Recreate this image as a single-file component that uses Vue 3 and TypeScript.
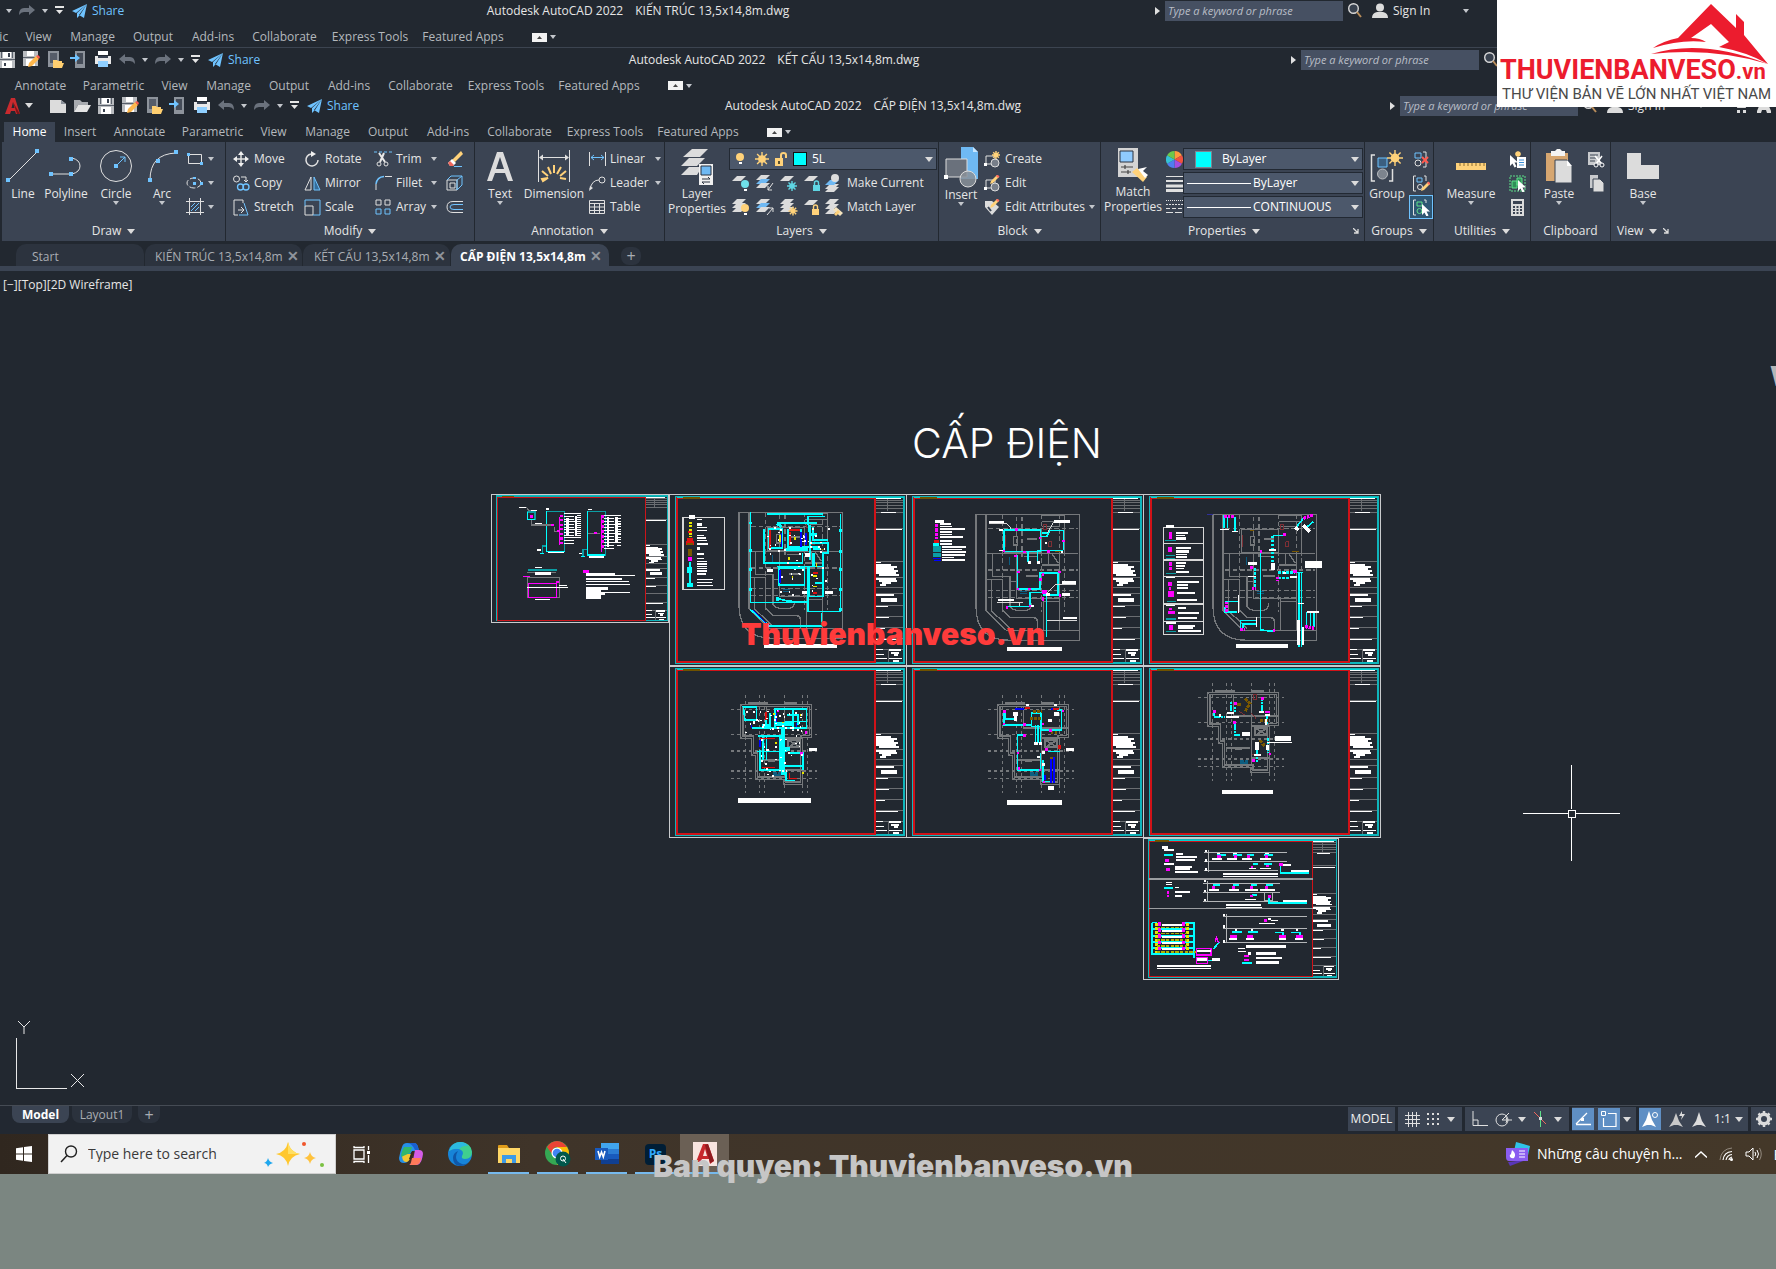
<script setup lang="ts">
import { h } from 'vue'

type IconDef = [number, number, string]

const L = 'fill="none" stroke="#e0e0e0"'
const B = 'fill="none" stroke="#6fc3ff"'
const lay = (y: number, c = '#dcdcdc') => `<path d="M5 ${y}h9l-5 5h-9z" fill="${c}"/>`
const bulb = (x: number, y: number, c: string) =>
  `<circle cx="${x}" cy="${y}" r="4" fill="${c}"/><path d="M${x - 1} ${y + 5}h3v2h-3z" fill="#fff"/>`
const ray = (x: number, y: number, r: number, c = '#ffd27a') =>
  `<circle cx="${x}" cy="${y}" r="${r * 0.55}" fill="${c}"/><g stroke="${c}" stroke-width="1.4"><path d="M${x} ${y - r}V${y + r}M${x - r} ${y}H${x + r}M${x - r * 0.7} ${y - r * 0.7}L${x + r * 0.7} ${y + r * 0.7}M${x - r * 0.7} ${y + r * 0.7}L${x + r * 0.7} ${y - r * 0.7}"/></g>`
const padlock = (x: number, y: number, c: string) =>
  `<path d="M${x} ${y}h7v6h-7z" fill="${c}"/><path d="M${x + 1.5} ${y}v-2a2 2 0 0 1 4 0v2" fill="none" stroke="${c}" stroke-width="1.4"/>`
const pencil = (x: number, y: number) =>
  `<path d="M${x} ${y + 9}l1-3 6-6 2 2-6 6z" fill="#ffd27a"/><path d="M${x + 6} ${y + 1}l1.500-1.500 2 2-1.500 1.500z" fill="#ff6b5e"/>`
const cursor = (x: number, y: number) =>
  `<path d="M${x} ${y}v11l2.500-2.500 2 4 2-1-2-4h3.500z" fill="#fff"/>`

const icons: Record<string, IconDef> = {
  acad: [18, 18, '<path d="M7 1h4l5 16h-4l-1-3H7l-1 3H1zM9 5l-1.500 6h3z" fill="#c92a2e" fill-rule="evenodd"/><path d="M9 5l7 12h-3z" fill="#7d1317"/>'],
  doc: [18, 14, '<path d="M1 1h11l5 4v9H1z" fill="#dcdcdc"/><path d="M12 1v4h5" fill="#8a9099"/>'],
  open: [18, 14, '<path d="M1 13V1h6l2 2h6v3H5z" fill="#a8abb0"/><path d="M5 6h13l-4 7H1z" fill="#e4e4e4"/>'],
  save: [16, 16, '<path d="M0 0h16v16H0z" fill="#b9bcc0"/><path d="M4 0h8v6H4zM3 9h10v7H3z" fill="#fff"/><path d="M0 7h16v1H0zM2 0h1v6H2zM13 0h1v6h-1z" fill="#59606b"/><path d="M9 1h2v4H9zM5 11h2v3H5z" fill="#39414e"/>'],
  saveas: [18, 17, '<path d="M1 0h15v15H1z" fill="#b9bcc0"/><path d="M5 0h7v5H5zM4 8h9v7H4z" fill="#fff"/><path d="M1 6h15v1H1z" fill="#59606b"/><path d="M6 16l1-4 7-7 3 3-7 7z" fill="#ffb84d"/><path d="M14 5l2-1 2 2-1 2z" fill="#ff5a4f"/>'],
  mopen: [18, 18, '<path d="M2 0h11v16H2z" fill="#8d939b"/><path d="M4 2h7v10H4z" fill="#565d69"/><path d="M7 17V9h4l1 1h4v2h2l-2 5z" fill="#ffcf70"/>'],
  mobile: [18, 18, '<path d="M5 0h10v17H5z" fill="#8d939b"/><path d="M7 2h6v11H7z" fill="#454c58"/><path d="M0 6h5V3l5 4-5 4V8H0z" fill="#6fc3ff"/>'],
  print: [18, 17, '<path d="M4 0h10v4H4z" fill="#fff"/><path d="M1 5h16v8H1z" fill="#e8e8e8"/><path d="M4 5h10v2H4z" fill="#3b4453"/><path d="M4 10h10v6H4z" fill="#8fcfff"/>'],
  undo: [16, 12, '<path d="M0 5l6-5v3h5q5 0 5 7-2-3-5-3H6v3z" fill="#6b727d"/>'],
  redo: [16, 12, '<path d="M16 5l-6-5v3H5q-5 0-5 7 2-3 5-3h5v3z" fill="#6b727d"/>'],
  dd: [9, 9, '<path d="M0 0h9v2H0zM1 4h7L4.500 8z" fill="#e6e6e6"/>'],
  tri: [6, 4, '<path d="M0 0h6L3 4z" fill="#c4c7cc"/>'],
  bigtri: [8, 5, '<path d="M0 0h8L4 5z" fill="#dcdcdc"/>'],
  rtri: [5, 8, '<path d="M0 0l5 4-5 4z" fill="#e0e0e0"/>'],
  plane: [15, 14, '<path d="M15 0L0 7l4 2zM15 0L5 9v5l3-3zM15 0l-3 14-5-3z" fill="#6fc3ff"/>'],
  mag: [14, 15, '<circle cx="5.500" cy="5.500" r="4.800" fill="#39424f" stroke="#d8d8d8" stroke-width="1.400"/><path d="M9 9l4 5" stroke="#b98d5a" stroke-width="2"/>'],
  person: [16, 15, '<circle cx="8" cy="4.500" r="4" fill="#dcdcdc"/><path d="M0 15q0-5 5-6h6q5 1 5 6z" fill="#dcdcdc"/>'],
  cart: [14, 14, '<path d="M0 1h3l2 7h7l2-5H4" fill="none" stroke="#dcdcdc" stroke-width="2"/><path d="M4 11h3v3H4zM10 11h3v3h-3z" fill="#dcdcdc"/>'],
  appA: [14, 14, '<path d="M5 0h4l5 12v2h-4l-1-3H5l-1 3H0v-2z" fill="#dcdcdc"/>'],
  mini: [15, 9, '<path d="M0 0h15v9H0z" fill="#f2f2f2"/><path d="M5 6l2.500-3L10 6z" fill="#444"/>'],
  launch: [6, 6, '<path d="M0 0l5 5M5 1v4H1" fill="none" stroke="#dcdcdc" stroke-width="1.300"/>'],
  line: [34, 34, `<path d="M3 31L31 3" ${L}/><path d="M0 29h4v4H0zM29 0h4v4h-4z" fill="#6fc3ff"/>`],
  polyline: [34, 34, `<path d="M3 25h20q8-2 8-8t-8-8" ${L}/><path d="M0 23h4v4H0zM20 23h4v4h-4zM20 8h4v4h-4z" fill="#6fc3ff"/>`],
  circle: [34, 34, `<circle cx="17" cy="17" r="15.500" ${L}/><path d="M17 17l9-9M21 8h5v5" ${B}/><path d="M15 15h4v4h-4z" fill="#6fc3ff"/>`],
  arc: [34, 34, `<path d="M5 31Q5 5 31 4" ${L}/><path d="M3 29h4v4H3zM11 10h4v4h-4zM29 1h4v4h-4z" fill="#6fc3ff"/>`],
  rect: [18, 14, `<path d="M2.500 2.500h13v9h-13z" ${L}/><path d="M1 1h3v3H1zM14 10h3v3h-3z" fill="#6fc3ff"/>`],
  ellipse: [18, 14, `<ellipse cx="8" cy="7" rx="7" ry="5" ${L} stroke-dasharray="6 2"/><path d="M7 6h3v3H7zM14 6h3v3h-3zM7 1h3v2H7z" fill="#6fc3ff"/>`],
  hatch: [18, 18, `<path d="M3.500 0v17M14.500 0v17M0 3.500h18M0 14.500h18" ${L}/><path d="M5 9l4-4M5 13l8-8M9 13l4-4" ${B}/>`],
  move: [16, 16, `<path d="M8 2v12M2 8h12" ${L} stroke-width="1.500"/><path d="M8 0l3 4H5zM8 16l3-4H5zM0 8l4-3v6zM16 8l-4-3v6z" fill="#f0f0f0"/>`],
  rotate: [16, 16, `<path d="M7 3a6 6 0 1 0 7 6" ${L} stroke-width="1.500"/><path d="M7 0l5 3-5 3z" fill="#f0f0f0"/>`],
  trim: [18, 16, `<path d="M0 1h18" ${B} stroke-dasharray="3 2"/><path d="M5 2l6 9M10 2L6 11" stroke="#e8e8e8" stroke-width="2"/><circle cx="5" cy="13" r="2" ${L}/><circle cx="12" cy="13" r="2" ${L}/>`],
  erase: [17, 16, '<path d="M6 9l9-9 2 3-8 8z" fill="#ffd27a"/><path d="M2 12l4-4 4 4-3 3H4z" fill="#fff"/><path d="M2 12l2-2 4 4-1 1H4z" fill="#f0675c"/><path d="M8 15.500h8" stroke="#6fc3ff"/>'],
  copy: [17, 16, `<circle cx="3.500" cy="4" r="3" ${L}/><path d="M8 2h5v5M11 5l2 2 2-2" ${L}/><circle cx="7.500" cy="12" r="3" ${B} stroke-width="1.300"/><circle cx="13" cy="12" r="3" ${B} stroke-width="1.300"/>`],
  mirror: [17, 15, `<path d="M7 1v13H1z" ${L}/><path d="M10 1v13h6z" fill="#356c99" stroke="#6fc3ff"/>`],
  fillet: [17, 16, `<path d="M1 15V9" ${L}/><path d="M1 9Q2 2 9 1.500" ${B} stroke-width="1.500"/><path d="M10 1.500h7" ${L}/>`],
  box3: [17, 16, `<path d="M1 5h10v10H1zM4 8h5v5H4z" ${L}/><path d="M1 5l4-4h11v9l-5 5V5l5-4M5 1" ${B}/>`],
  stretch: [16, 17, `<path d="M10 4V1H1v15h4M5 11h6M8 8l3 3-3 3" ${L}/><path d="M11 4l4 12H6" ${B}/>`],
  scale: [17, 17, `<path d="M1 7h8v9H1z" ${L}/><path d="M1 7V1h15v15H9" ${B}/>`],
  array: [16, 16, `<path d="M1 1h5v5H1zM10 1h5v5h-5z" ${L}/><path d="M1 10h5v5H1zM10 10h5v5h-5z" ${B}/>`],
  offset: [17, 14, `<path d="M17 1.500H7q-6 0-6 5.500t6 5.500h10" ${L}/><path d="M17 4.500H8q-4 0-4 2.500t4 2.500h9" ${B}/>`],
  text: [28, 34, '<path d="M11 3h6l10 29h-5l-3-8H9l-3 8H1zM14 8l-4 12h8z" fill="#dcdcdc" fill-rule="evenodd"/>'],
  dim: [34, 34, `<path d="M1.500 1v32M32.500 1v32M3 8.500h28" ${L}/><path d="M2 8.500l4-3v6zM32 8.500l-4-3v6z" fill="#e0e0e0"/><path d="M5 30l6-1-5 3zM5 22l6 5M11 18l3 7M17 16v8M24 18l-4 7M29 22l-6 5M29 30l-6-1" stroke="#ffd27a" stroke-width="2"/>`],
  linear: [17, 15, `<path d="M.5 0v14M16.500 0v14" ${L}/><path d="M2 5.500h13M5 3L2 5.500 5 8M12 3l3 2.500L12 8" ${B}/>`],
  leader: [17, 15, `<path d="M1 13q2-9 9-9" ${L}/><circle cx="13" cy="4" r="3" ${L}/><path d="M0 15l1-5 3 2z" fill="#e0e0e0"/>`],
  table: [16, 14, `<path d="M.5.500h15v13H.500zM.500 3.500h15M.500 7h15M.500 10.500h15M5.500 3v11M10.500 3v11" ${L}/>`],
  layprop: [34, 38, '<path d="M12 2h16l-8 8H3zM9 11h16l-8 8H1zM9 20h13l-5 8H1z" fill="#dcdcdc"/><path d="M19 17h14v21H19z" fill="#f0f0f0"/><path d="M21 19h10v9H21z" fill="#6fb9f3" stroke="#2b3340"/><path d="M22 32h8M28 30l2 2M22 35h8M22 35l2 2" stroke="#2b3340" fill="none"/>'],
  bulbI: [10, 15, bulb(5, 5, '#ffd27a')],
  sun: [14, 14, ray(7, 7, 7)],
  unlock: [14, 14, '<path d="M1 6h8v8H1z" fill="#ffd27a"/><path d="M7 6V3q0-2 2.500-2T12 3v3" fill="none" stroke="#ffd27a" stroke-width="2"/><path d="M4 9h2v3H4z" fill="#5a5030"/>'],
  l1: [18, 17, lay(1) + bulb(13, 9, '#6fe0ea')],
  l2: [18, 17, lay(0) + lay(4, '#6fb9f3') + lay(8) + `<path d="M17 8l-5 7M12 11v4h4" ${L}/>`],
  l3: [18, 17, lay(1) + ray(12, 11, 5, '#5fd5e3')],
  l4: [18, 17, lay(1) + padlock(9, 10, '#5fd5e3')],
  l5: [18, 18, lay(13) + lay(10) + lay(6, '#6fb9f3') + '<circle cx="10" cy="4" r="4" fill="#dcdcdc"/>'],
  l6: [18, 17, lay(0) + lay(4) + lay(8) + bulb(13, 9, '#ffd27a')],
  l7: [18, 17, lay(0) + lay(4, '#6fb9f3') + lay(8) + `<path d="M11 16l6-7M13 9h4v4" ${L}/>`],
  l8: [18, 17, lay(0) + lay(4) + lay(8) + ray(13, 12, 4.5)],
  l9: [18, 17, lay(1) + padlock(8, 10, '#ffd27a')],
  l10: [18, 17, lay(0) + lay(5) + lay(10) + '<path d="M8 11l3-3 7 6-3 3z" fill="#f4e3bd"/><path d="M9 15l4-4 2 2-4 4z" fill="#ffd27a"/>'],
  insert: [34, 42, '<path d="M17 0h12l5 5v27H17z" fill="#6fb9f3"/><path d="M29 0v5h5z" fill="#c7e6ff"/><path d="M2 12h21v18H2z" fill="#6a717c" stroke="#dcdcdc"/><circle cx="24" cy="32" r="8" fill="#8a9099" fill-opacity=".85" stroke="#dcdcdc"/><path d="M0 28h4v4H0z" fill="#fff"/>'],
  create: [17, 17, `<path d="M2 5h9v8H2z" ${L}/><circle cx="11" cy="12" r="4" fill="#777e89" stroke="#dcdcdc"/>` + ray(12, 4, 4) + '<path d="M0 12h3v3H0z" fill="#fff"/>'],
  edit: [17, 17, `<path d="M2 5h9v8H2z" ${L}/><circle cx="11" cy="12" r="4" fill="#777e89" stroke="#dcdcdc"/>` + pencil(6, 0) + '<path d="M0 12h3v3H0z" fill="#fff"/>'],
  attr: [17, 17, '<path d="M1 2h7l7 6-7 8-7-8z" fill="#dcdcdc"/><path d="M4 8l3 4" stroke="#3b4453" stroke-width="2"/>' + pencil(6, 0)],
  match: [34, 36, '<path d="M2 1h20v29H2z" fill="#d4d4d4"/><path d="M4 4h13v11H4z" fill="#8fcbff" stroke="#2b3340"/><path d="M5 20h12M9 18v4M5 25h10M12 23v4" stroke="#444" stroke-width="1.200"/><path d="M16 25l5-4 10 9-4 5z" fill="#ffd27a"/><path d="M22 22l9-2-4 4 5 4-3 3z" fill="#fff"/>'],
  wheel: [17, 17, '<g transform="translate(8.500 8.500)"><path d="M0 0V-8.500A8.500 8.500 0 0 1 7.400-4.200z" fill="#ff9a3c"/><path d="M0 0L7.400-4.200A8.500 8.500 0 0 1 7.400 4.200z" fill="#f0523f"/><path d="M0 0L7.400 4.200A8.500 8.500 0 0 1 0 8.500z" fill="#a44de0"/><path d="M0 0V8.500A8.500 8.500 0 0 1-7.400 4.200z" fill="#4f7df0"/><path d="M0 0L-7.400 4.200A8.500 8.500 0 0 1-7.400-4.200z" fill="#35c2d5"/><path d="M0 0L-7.400-4.200A8.500 8.500 0 0 1 0-8.500z" fill="#6cc94a"/></g>'],
  weights: [17, 17, '<path d="M0 1h17v1H0zM0 5h17v2H0zM0 9.500h17v3H0zM0 14h17v3H0z" fill="#e0e0e0"/>'],
  dashes: [17, 16, `<path d="M0 1.500h17" ${L} stroke-dasharray="1 1"/><path d="M0 5.500h17" ${L} stroke-dasharray="2 1"/><path d="M0 9.500h17" ${L} stroke-dasharray="4 2"/><path d="M0 13.500h17" ${L} stroke-dasharray="7 2"/>`],
  group: [34, 34, `<path d="M5 6H1.500v26H5M19 32h3.500V20" ${L} stroke-width="1.500"/><path d="M8 9h9v9H8z" fill="#3b5f80" stroke="#6fc3ff"/><circle cx="12.500" cy="25" r="5" fill="#7d848e" stroke="#b9bcc0"/>` + ray(25, 9, 8)],
  g1: [17, 17, `<path d="M2 2h6v5H2z" ${B}/><circle cx="5" cy="12" r="3" ${L}/><path d="M10 1h3v15h-3" ${L}/><path d="M9 6l6 6M15 6l-6 6" stroke="#ff5a4f" stroke-width="2"/>`],
  g2: [17, 17, `<path d="M3 1H.500v15H3M11 1h2v5" ${L}/><path d="M4 3h5v4H4z" ${B}/><circle cx="7" cy="12" r="2.500" ${L}/>` + pencil(8, 7)],
  g3: [17, 17, `<path d="M3 1H.500v15H3M11 1h2v3" ${L}/><path d="M4 3h5v4H4z" fill="none" stroke="#5fe08a"/><circle cx="6.500" cy="12" r="2.500" fill="none" stroke="#5fe08a"/>` + cursor(9, 5)],
  ruler: [30, 9, '<path d="M0 1h30v7H0z" fill="#ffd27a"/><path d="M4 1v3M8 1v3M12 1v3M16 1v3M20 1v3M24 1v3M28 1v3" stroke="#8a6d33"/>'],
  u1: [17, 17, cursor(1, 4) + '<path d="M8 6h9v11H8z" fill="#fff"/><path d="M10 9h5M10 11.500h5M10 14h5" stroke="#3a8fd8"/>' + ray(9, 3, 3)],
  u2: [17, 17, '<path d="M1 1h15v15H1z" fill="none" stroke="#5fe08a" stroke-dasharray="2 1"/><path d="M3 6h5v7H3zM8 3h5v7H8z" fill="#2f8f58" stroke="#5fe08a"/>' + cursor(9, 5)],
  calc: [13, 17, '<path d="M0 0h13v17H0z" fill="#dcdcdc"/><path d="M2 2h9v3H2zM2 7h2v2H2zM5.500 7h2v2h-2zM9 7h2v2H9zM2 10h2v2H2zM5.500 10h2v2h-2zM9 10h2v2H9zM2 13h2v2H2zM5.500 13h2v2h-2zM9 13h2v2H9z" fill="#3b4453"/>'],
  paste: [28, 34, '<path d="M1 4h22v28H1z" fill="#d6a670"/><path d="M6 2h4l2-2h3l2 2h3v5H6z" fill="#f4f4f4"/><path d="M10 11h12l5 6v17H10z" fill="#dcdcdc" stroke="#3b4453"/><path d="M22 11v6h5z" fill="#fff"/>'],
  cut: [17, 17, '<path d="M0 1h12v13H0z" fill="#c8cacd"/><path d="M2 4h8M2 7h6M2 10h5" stroke="#3b4453"/><path d="M7 5l7 8M14 5l-6 8" stroke="#fff" stroke-width="1.500"/><circle cx="8" cy="14" r="2" fill="#3b4453" stroke="#fff"/><circle cx="14" cy="14" r="2" fill="#3b4453" stroke="#fff"/>'],
  copy2: [15, 17, '<path d="M1 0h8v13H1z" fill="#c8cacd"/><path d="M4 4h7l4 4v9H4z" fill="#dcdcdc" stroke="#3b4453"/>'],
  base: [34, 26, '<path d="M1 0h14v12h18v14H1z" fill="#dcdcdc"/>'],
  grid: [15, 15, `<path d="M0 3.500h15M0 7.500h15M0 11.500h15M3.500 0v15M7.500 0v15M11.500 0v15" ${L}/>`],
  dots: [13, 13, '<path d="M0 0h2v2H0zM5 0h2v2H5zM10 0h2v2h-2zM0 5h2v2H0zM5 5h2v2H5zM10 5h2v2h-2zM0 10h2v2H0zM5 10h2v2H5zM10 10h2v2h-2z" fill="#dcdcdc"/>'],
  ortho: [16, 16, `<path d="M1 0v14.500h15M1 9h5v5" ${L}/>`],
  polar: [17, 15, `<circle cx="7" cy="8" r="6" ${L}/><path d="M7 8h10M7 8l7-7M11 5q2 3 0 6" ${L}/>`],
  iso: [14, 16, '<path d="M1 1l12 12" stroke="#f0675c"/><path d="M7.500 0v16" stroke="#5fe08a"/><path d="M6 6h3v3H6z" fill="#dcdcdc"/>'],
  otrack: [17, 14, '<path d="M1 12.500h15M1 12L12 1" fill="none" stroke="#fff" stroke-width="1.300"/><path d="M6 6h3v3H6z" fill="#fff"/>'],
  osnap: [16, 16, '<path d="M7 2.500h8v13H2.500V7" fill="none" stroke="#fff" stroke-width="1.200"/><path d="M.500.500h4v4h-4z" fill="none" stroke="#fff"/>'],
  ann1: [16, 16, '<path d="M7 0l3 9 4 7-5-2H5l-5 2 4-7z" fill="#fff"/><circle cx="13" cy="4" r="2.500" fill="none" stroke="#fff"/>'],
  ann2: [16, 16, '<path d="M7 2l3 8 4 6-5-2H5l-5 2 4-6z" fill="#c8c8c8"/><path d="M13 0l-3 5h3l-1 4 4-6h-3z" fill="#dcdcdc"/>'],
  ann3: [14, 15, '<path d="M7 0l3 9 4 6-5-2H5l-5 2 4-6z" fill="#dcdcdc"/>'],
  gear: [16, 16, '<circle cx="8" cy="8" r="4.500" fill="none" stroke="#dcdcdc" stroke-width="4"/><path d="M8 0v16M0 8h16M2.500 2.500l11 11M13.500 2.500l-11 11" stroke="#dcdcdc" stroke-width="2.500"/><circle cx="8" cy="8" r="3" fill="#3b4453"/>'],
  win: [16, 16, '<path d="M0 2.200l7-1v6.300H0zM8 1l8-1v7.500H8zM0 8.500h7v6.300l-7-1zM8 8.500h8V16l-8-1z" fill="#fff"/>'],
  find: [18, 18, '<circle cx="11" cy="6.500" r="5.500" fill="none" stroke="#222" stroke-width="1.400"/><path d="M7 10.500L1 17" stroke="#222" stroke-width="1.500"/>'],
  spark: [62, 26, '<path d="M24 1q2 10 12 12-10 2-12 12-2-10-12-12 10-2 12-12z" fill="#ffc72e"/><path d="M24 1q2 10 12 12H24z" fill="#ffdf63"/><path d="M46 11q1 5 6 6-5 1-6 6-1-5-6-6 5-1 6-6z" fill="#ffc23c"/><path d="M4 17q1 4 5 5-4 1-5 4-1-4-4-4 3-1 4-5z" fill="#1fa7ee"/><circle cx="40" cy="3" r="2" fill="#f0562c"/><circle cx="58" cy="24" r="2" fill="#7ac142"/>'],
  task: [17, 17, '<path d="M1 4h10v9H1zM1 0v1.500h10V0M1 17v-1.500h10V17M15.500 0v4M15.500 9v8" fill="none" stroke="#fff" stroke-width="1.300"/><path d="M14 5h3v3h-3z" fill="#fff"/>'],
  copilot: [24, 24, '<path d="M8 1h7q3 0 4 4l1 4h-5q-3 0-4 4l-2 6q-1 2-4 2-5 0-5-5 1-6 3-11 1-4 5-4z" fill="#2590e8"/><path d="M3 12q0 8 4 8 3 0 4-4l1-4z" fill="#f3c630"/><path d="M5 5q-3 6-3 10l9-4 2-6z" fill="#32b76c"/><path d="M8 1h7q3 0 4 4l1 3h-4q-3-7-8-7z" fill="#1a5fd0"/><path d="M16 8h4q4 0 4 4-1 7-3 9-1 2-5 2h-6q3-1 4-5z" fill="#d45ce6"/><path d="M13 16h9l-1 4q-1 3-5 3h-5q1-2 2-7z" fill="#ff7a59"/><path d="M13 9h2l-3 8h-2z" fill="#33291f"/>'],
  edge: [24, 24, '<circle cx="12" cy="12" r="12" fill="#1784d8"/><path d="M1 9Q4 0 13 0q10 1 11 10 0 7-7 7-4 0-3-3 3-5-3-7-6-1-10 2z" fill="#3fcf8f"/><path d="M1 9Q3 1 12 0q6 0 8 4-5-1-9 3-6-1-10 2z" fill="#2cb9e0"/><path d="M8 15q0 5 6 7 4 1 7-2-3 4-9 4-7-1-7-8 0-5 5-7-2 3-2 6z" fill="#0f57a8"/>'],
  explorer: [22, 20, '<path d="M0 2q0-1 1-1h8l2 3H0z" fill="#e09c1a"/><path d="M0 4h22v15H0z" fill="#ffd766"/><path d="M4 19v-8h14v8h-4v-4H8v4z" fill="#3c9ae8"/>'],
  chrome: [26, 26, '<circle cx="12" cy="12" r="12" fill="#35a853"/><path d="M2 6Q6 0 12 0t10 6H12q-5 0-5 7z" fill="#ea4335"/><path d="M12 6h10q2 3 2 6-1 11-12 12l5-9z" fill="#fbbc05"/><circle cx="12" cy="12" r="5.500" fill="#fff"/><circle cx="12" cy="12" r="4.300" fill="#4285f4"/><circle cx="18" cy="18" r="7.500" fill="#00574b"/><circle cx="18" cy="17.500" r="2.500" fill="none" stroke="#fff"/><path d="M18 18l3 4" stroke="#fff"/>'],
  word: [24, 22, '<path d="M6 0h18v6H6z" fill="#41a5ee"/><path d="M6 6h18v5H6z" fill="#2b7cd3"/><path d="M6 11h18v5H6z" fill="#185abd"/><path d="M6 16h18v5H6z" fill="#103f91"/><path d="M0 5h13v12H0z" fill="#185abd"/><path d="M3 8l1.700 6L6.500 9l1.800 5L10 8" fill="none" stroke="#fff" stroke-width="1.600"/>'],
  cadapp: [24, 24, '<path d="M0 0h24v24H0z" fill="#f8e4df"/><path d="M10 2h5l6 17-4 3-1-5H9l-2 3H3zM12 7l-2 7h4z" fill="#c8282d" fill-rule="evenodd"/><path d="M12 3l3-1 6 17-4 2z" fill="#8f1a1f"/>'],
  news: [24, 24, '<path d="M10 0l14 4-3 14L7 14z" fill="#2fc3e8"/><path d="M2 20l18-2-16 6z" fill="#5936b8"/><path d="M0 6h22v13H3q-3 0-3-4z" fill="#8a5cf0"/><path d="M13 9h6M13 12h6M13 15h6" stroke="#fff" stroke-width="1.200"/><path d="M6 8q5 4 2 8-2 1-4-1-1-2 1-3z" fill="#fff"/>'],
  chev: [12, 7, '<path d="M0 6.500L6 1l6 5.500" fill="none" stroke="#fff" stroke-width="1.400"/>'],
  wifi: [14, 14, '<path d="M1 13Q2 2 13 1" fill="none" stroke="#938a7f"/><path d="M4 13Q5 5 13 4.500M7 13q1-5 6-5.500M10 13q0-2 3-3" fill="none" stroke="#fff" stroke-width="1.200"/><circle cx="12.500" cy="12.500" r="1.500" fill="#fff"/>'],
  vol: [17, 14, '<path d="M1 5h3l4-4v12l-4-4H1z" fill="none" stroke="#fff"/><path d="M10 5q1.500 2 0 4M12 3q3 4 0 8" fill="none" stroke="#fff"/><path d="M14.500 1q3.500 6 0 12" fill="none" stroke="#938a7f"/>'],
}

const Icon = (p: { n: string }) => {
  const [w, ht, m] = icons[p.n]
  return h('svg', { width: w, height: ht, viewBox: `0 0 ${w} ${ht}`, 'aria-hidden': 'true', style: { flex: 'none', display: 'block' }, innerHTML: m })
}
Icon.props = ['n']

const tabs: [string, number][] = [
  ['Home', 51], ['Insert', 50], ['Annotate', 69], ['Parametric', 77], ['View', 45], ['Manage', 63],
  ['Output', 58], ['Add-ins', 62], ['Collaborate', 81], ['Express Tools', 90], ['Featured Apps', 96],
]
const fileTools = ['doc', 'open', 'save', 'saveas', 'mopen', 'mobile', 'print', 'undo']
const windows = [
  { file: 'KIẾN TRÚC 13,5x14,8m.dwg', shift: -235, id: 'w1' },
  { file: 'KẾT CẤU 13,5x14,8m.dwg', shift: -99, id: 'w2' },
  { file: 'CẤP ĐIỆN 13,5x14,8m.dwg', shift: 0, id: 'w3' },
]

const modify = [
  [['move', 'Move'], ['copy', 'Copy'], ['stretch', 'Stretch']],
  [['rotate', 'Rotate'], ['mirror', 'Mirror'], ['scale', 'Scale']],
  [['trim', 'Trim'], ['fillet', 'Fillet'], ['array', 'Array']],
]
const apps = [
  { n: 'task', run: false }, { n: 'copilot', run: false }, { n: 'edge', run: false }, { n: 'explorer', run: true },
  { n: 'chrome', run: true }, { n: 'word', run: true }, { n: 'ps', run: true }, { n: 'cadapp', run: true },
]

/* ---- model space drawing ---- */
const CY = '#00ffff', CD = '#0b9da3', MG = '#ff00ff', WH = '#ffffff', GR = '#75787b', RD = '#e01010', YE = '#e6e600', BL = '#0000ff', OR = '#7a5800'

// Turns "x y w h; x y w h" into closed boxes
const boxes = (s: string) => s.split(';').map(r => {
  const [x, y, w, ht] = r.trim().split(/\s+/).map(Number)
  return `M${x} ${y}h${w}v${ht}h${-w}z`
}).join('')

// Repeatable scatter of fixture symbols inside a region
const scatter = (seed: number, n: number, x: number, y: number, w: number, ht: number, size = 6) => {
  let s = seed, d = ''
  const next = () => (s = (s * 1103515245 + 12345) % 2147483648) / 2147483648
  for (let i = 0; i < n; i++) {
    d += `M${Math.round(x + next() * w)} ${Math.round(y + next() * ht)}h${size}v${size}h${-size}z`
  }
  return d
}

const sheets = [
  [491, 494, 0.751], [669, 494, 1], [906, 494, 1], [1143, 494, 1],
  [669, 666, 1], [906, 666, 1], [1143, 666, 1], [1143, 838, 0.823],
]
const blockText = boxes('206 4 26 1;212 18 15 1;206 35 27 1;207 68 5 1;207 70 15 2;207 72 21 2;207 74 18 2;207 76 22 2;207 78 20 2;210 80 20 2;207 84 20 2;210 86 18 2;213 88 9 2;211 90 6 2;207 100 18 2;212 104 16 4;207 112 12 1;207 123 13 1;207 134 9 1;207 145 22 1;206 155 8 1;220 155 12 2;222 158 8 2;225 160 4 2;206 160 9 1;206 164 12 1;220 164 13 1;224 166 6 2')
const blockLines = 'M206 6H234M206 8H234M206 11H234M206 14H234M206 18H234M206 34H234M206 67H234M206 83H234M206 93H234M206 99H234M206 111H234M206 122H234M206 133H234M206 144H234M206 155H234M219 155V169M218 4V17M206 3V169'

type Shape = { c: string; d: string; f?: boolean; w?: number; dash?: string }
const groundPlan: Shape[] = [
  { c: GR, w: 4, d: 'M228 313H538V691H330Q228 691 228 590ZM258 313V603L320 662H538M258 430H535M277 430V500H330V590Q340 602 360 602H378Q395 598 395 580M307 508V600L330 623H400Q413 623 413 640V662M275 508V603L330 655M258 508H307M313 358H425V428H313ZM350 430V565H478V430ZM425 315H493V430M425 335H493M425 350H480M425 465H478M445 430V465M455 430L475 460M430 565V662M478 565V662M430 575H478M340 380H352V405H340ZM380 387H410M372 440H410M378 498H415M330 500V515H350' },
  { c: GR, w: 4, dash: '14 8', d: 'M265 355H535M265 480H535M265 541H535M265 562H535M308 313V605M350 320V440M366 320V440M425 313V605M478 313V605M493 313V605' },
  { c: '#7d2f35', d: 'M316 375V410M430 345H440V358H430ZM447 395H455V410H447ZM425 480V495' },
  { c: OR, w: 5, d: 'M465 425H485M340 362H352' },
  { c: '#0c5d80', d: 'M330 440V465M360 545H380M360 552H380' },
]
const upperPlan: Shape[] = [
  { c: GR, w: 11, d: 'M246 137H452V230H425V370H375V355H290V283H278V232H246ZM265 133H320V137M372 133H405V137' },
  { c: '#222830', w: 3, d: 'M246 137H452V230H425V370H375V355H290V283H278V232H246Z' },
  { c: GR, w: 5, d: 'M374 137V355M374 235H425M320 137V205H374M374 205H452M385 240H420V262H385ZM385 240L420 262M420 240L385 262M297 300H370M325 305H345M375 330H425' },
  { c: GR, w: 4, dash: '10 8', d: 'M256 105V400M298 105V400M314 105V400M374 105V400M427 105V400M442 105V400M213 148H470M213 223H470M213 273H470M213 333H470M213 355H470' },
  { c: '#0c5d80', w: 5, d: 'M340 340H350M355 340H362M340 346H362' },
]
const groups: { o: string; s: Shape[] }[] = [
  { o: '663 408', s: groundPlan },
  { o: '900 410', s: groundPlan },
  { o: '1137 410', s: groundPlan },
  { o: '660 660', s: upperPlan },
  { o: '917 660', s: upperPlan },
  { o: '1127 648', s: upperPlan },
  { o: '480 410', s: [
    // distribution board schematics
    { c: CD, w: 4, d: 'M142 306H165V328H142ZM199 304H254V425H199ZM322 304H376V435H322ZM199 408H187V430M322 418H309V440M145 480H232' },
    { c: CY, w: 4, d: 'M199 304V425H254M322 304V435H376M181 430H193M303 440H315M142 306V328H165' },
    { c: GR, w: 4, d: 'M117 293H140L148 302H170M154 330V345H220M142 503H238V563H142ZM224 350V365H238M325 370H360M142 487H228' },
    { c: MG, d: 'M145 520V563H231V520H145M240 320V405M366 315V425M130 500H150M152 315V323' },
    { c: MG, w: 7, d: 'M240 318H250M240 330H250M240 345H250M240 358H250M240 372H250M240 386H250M240 400H250M362 320H372M362 335H372M362 350H372M362 365H372M362 380H372M362 395H372M362 410H372M214 345H222M343 370H350M230 363H238M309 485H327M228 517H238M150 320H158' },
    { c: WH, f: true, d: boxes('117 292 20 3;152 300 18 3;198 294 9 6;325 297 10 3;165 339 20 3;204 425 48 4;327 438 46 6;171 418 12 5;296 429 10 3;165 471 22 3;165 487 48 8;142 530 122 3;236 525 25 3;165 567 45 3;318 489 87 6;318 495 147 3;318 503 108 6;318 513 128 4;318 521 132 4;318 530 66 9;318 538 46 8;318 545 132 4;318 549 58 6;318 555 44 11') },
    { c: WH, f: true, d: boxes(Array.from({ length: 12 }, (_, i) => `${252} ${310 + i * 8} ${i % 3 ? 30 : 50} 3;${292} ${310 + i * 6} 11 3;${372} ${316 + i * 9} ${i % 3 ? 30 : 50} 3;${410} ${316 + i * 8} 12 3`).join(';')) },
    { c: WH, f: true, d: boxes('258 325 10 50;286 318 5 60;380 320 8 90;405 320 8 80') },
    // lighting legend and ground floor lighting
    { c: '#d8d8d8', w: 4, d: 'M609 323H734V538H609Z' },
    { c: WH, f: true, d: boxes('627 315 18 12;651 327 15 4;651 339 14 8;651 351 30 4;651 360 30 3;651 374 22 3;651 381 27 6;651 389 30 4;651 399 33 5;651 410 9 10;651 430 20 4;651 443 20 4;651 453 30 4;651 460 30 4;651 467 30 4;651 474 30 4;651 481 30 4;651 488 28 6;651 507 48 3;651 516 45 3;651 525 48 3') },
    { c: YE, w: 9, dash: '6 5', d: 'M631 335V380' },
    { c: RD, f: true, d: boxes('622 383 18 10;618 394 24 10;625 362 12 6') },
    { c: OR, f: true, d: boxes('625 418 12 20;622 400 18 6') },
    { c: MG, f: true, d: boxes('624 442 12 12') },
    { c: CY, f: true, d: boxes('626 456 8 62;622 470 14 20;620 519 18 12') },
    { c: CY, w: 5, d: 'M812 306V578H985V605H1082V312M860 312H1030M985 345V320H1035M853 357V460H968V430M810 598L868 648H1025V610M985 470V600M868 357H908V415H868ZM925 360H963V412H925ZM895 340H1010M890 470H1030V560H985M897 475H974V525H897ZM1045 397V430H1030V480M890 565L930 575H980M925 412H1020M990 345V450M1000 350V390H1045M990 400H1045M1005 520H1030M865 648H900' },
    { c: CY, w: 9, d: 'M915 418H985M985 470V560M990 345V365M1000 415H1020M990 375H1010M1000 430V470M890 340L905 350' },
    { c: RD, w: 5, d: 'M870 360V415M926 360H960M1000 490H1015M1000 550H1012M930 365V405' },
    { c: YE, w: 5, d: 'M900 375V395M945 380V390M928 440V450M938 498V508M998 498H1012M998 530H1012M1010 460V470' },
    { c: BL, w: 4, d: 'M963 365V412M905 370V410M978 370V405M900 480V520' },
    { c: WH, f: true, d: scatter(7, 32, 855, 350, 190, 80, 5) + scatter(21, 20, 890, 430, 150, 125, 5) },
    { c: CY, f: true, d: boxes('808 335 8 8;808 418 8 8;808 475 8 8;808 535 8 8;1078 358 8 8;1078 420 8 8;1078 475 8 8;1078 535 8 8;1078 595 8 8;915 308 8 8;970 308 8 8;887 562 10 10;925 570 10 10;958 644 8 8') },
    { c: WH, f: true, d: boxes('862 478 18 7;1036 542 22 9;976 430 14 12;965 543 16 8;852 703 219 10') },
    { c: BL, w: 3, d: 'M818 598L865 645' },
  ] },
  { o: '900 410', s: [
    // socket layout
    { c: CY, w: 5, d: 'M311 360H422V425H313V360M385 425V457M413 457V422H488M422 380H440L450 362H491V420M345 437H353V537H420V490H475V555H430M320 590H390V548H440V680M425 370H445' },
    { c: MG, f: true, d: boxes('346 354 7 9;308 420 7 7;370 422 7 7;342 434 8 6;352 482 7 7;350 533 7 7;385 534 7 7;418 505 8 7;426 490 7 7;475 483 7 7;487 389 7 7;425 541 16 10;425 560 6 12;476 553 6 8;317 587 7 9;388 584 6 6;416 380 7 7;442 420 8 8') },
    { c: '#d8d8d8', d: 'M267 341H320L335 358M510 337H460L442 370M528 524H465L440 550M531 632H440M292 577H370M358 577V587' },
    { c: WH, f: true, d: boxes('267 333 45 7;462 330 48 8;485 514 43 8;490 621 41 7;294 567 48 6;392 585 10 7;486 548 24 9;296 358 14 4;385 453 8 8;411 453 8 8;482 422 8 8;434 395 8 6;296 420 14 4;437 548 12 10;321 711 165 11;105 330 27 8;120 339 33 6;120 348 36 3;120 354 75 6;120 363 36 5;120 371 36 4;120 378 69 6;120 389 36 6;120 398 36 7;126 408 72 5;126 416 60 4;126 424 72 5;126 432 69 6;126 440 36 4;126 447 69 6') },
    { c: MG, w: 9, dash: '10 3', d: 'M110 342V386' },
    { c: CD, f: true, d: boxes('99 408 24 8;99 418 24 8;99 428 24 12') },
    { c: CY, f: true, d: boxes('100 398 17 9') },
    { c: RD, f: true, d: boxes('102 391 14 7') },
    { c: BL, f: true, d: boxes('100 443 24 4;103 449 20 5') },
    // air conditioning legend and layout
    { c: '#d8d8d8', w: 4, d: 'M790 352H911V673H790ZM790 400H911M790 450H911M790 499H911M790 582H911M790 634H911' },
    { c: WH, f: true, d: boxes('798 345 24 10;828 367 36 5;828 374 27 5;828 380 30 9;828 411 45 7;828 421 38 8;828 431 32 5;828 438 32 5;828 457 30 6;828 465 27 5;828 474 24 4;828 483 40 5;831 513 66 6;831 522 32 6;831 532 32 6;831 546 54 6;831 567 60 6;834 592 24 5;834 605 63 6;834 621 57 6;834 645 52 5;834 652 45 5;834 660 70 6;798 637 30 4;798 502 26 3;798 584 26 3') },
    { c: MG, f: true, d: boxes('807 367 9 20;804 411 12 16;807 457 9 10;807 470 9 10;805 515 10 14;806 530 8 10;804 543 18 18;806 595 10 6;804 603 20 10;807 645 12 16') },
    { c: CD, w: 4, d: 'M795 391H827M797 437H825M797 446H825M798 490H827M800 574H828M798 627H827M798 665H827' },
    { c: CY, w: 5, d: 'M973 315V355M983 322V355M1005 322V362M1118 377H1150M1082 425V660L1120 664M1197 490V710M1205 490V710M1185 488H1210M1240 335L1222 350M1210 325L1190 350M975 575H1015M975 590V606H1010M1022 655V632H1068M1030 655V643H1068M1220 605V650M1232 610V650M1243 610V650' },
    { c: CY, w: 7, dash: '8 4', d: 'M1118 377V455M1065 475V535M1135 488H1185M1135 505H1170' },
    { c: MG, w: 10, dash: '8 3', d: 'M972 320H1005M1210 325L1240 315M1153 370V382M1050 472H1062M1055 535H1068M1132 500V512M1185 480V492M980 575V605M1020 658H1035M1215 650L1243 655M1080 425H1087M1118 662H1125' },
    { c: WH, f: true, d: boxes('960 356 28 4;995 363 18 4;1014 555 4 55;1068 622 4 30;1114 460 10 20;1215 454 50 14;1215 469 50 5;1192 630 8 75;1206 650 6 55;1222 603 34 5;1106 418 22 4;1044 457 26 7;1044 499 25 3;1150 485 8 6;1170 499 20 6;1193 579 18 4;1008 702 156 11') },
    { c: WH, w: 10, d: 'M1186 352L1196 360M1210 345L1230 365' },
    { c: '#30309a', w: 3, d: 'M922 313H940' },
  ] },
  { o: '660 660', s: [
    // first floor lighting
    { c: CY, w: 5, d: 'M250 142H290V180H255ZM275 205H440V148H345V200M295 228H360V330H300V270M290 275H380M385 280H430V330M378 335V362H405M318 155V200M330 160V200M400 150V210M375 185H440M310 230V300M320 230V300M375 318H430M380 165H415V195' },
    { c: CY, w: 12, d: 'M370 200V345M305 197H330M345 192H400M365 268H390' },
    { c: RD, w: 4, d: 'M300 235H345M305 323H345M318 155V180M388 340V355H410' },
    { c: BL, w: 4, d: 'M275 195V205M350 160V185M300 240V260M410 190V200' },
    { c: MG, f: true, d: boxes('350 150 8 7;434 214 8 7;420 277 8 8') },
    { c: YE, f: true, d: boxes('420 163 6 5;366 185 6 5;345 245 6 6;425 335 6 6;340 160 6 6') },
    { c: WH, f: true, d: scatter(5, 40, 250, 148, 190, 70, 5) + scatter(9, 30, 290, 225, 135, 130, 5) },
    { c: WH, f: true, d: boxes('448 263 22 9;234 414 219 14') },
    // first floor sockets
    { c: CY, w: 5, d: 'M1032 152V195H1115M1035 150V178H1065M1145 190V210H1205V150H1190M1092 226H1073V330H1142V280M1127 195V248M1134 195V248M1142 195V248M1150 300V365H1170M1115 160H1143V200H1115ZM1165 275H1200' },
    { c: BL, w: 6, d: 'M1172 290V370M1183 290V370M1065 148H1092M1172 146H1195M1155 345V360' },
    { c: OR, w: 9, dash: '8 4', d: 'M1110 175H1145M1120 155H1145M1172 218H1195M1175 290V300' },
    { c: RD, f: true, d: boxes('1095 142 16 6;1180 143 16 6;1194 256 8 12') },
    { c: MG, f: true, d: boxes('1028 150 9 8;1030 189 6 6;1090 190 8 8;1090 222 8 9;1070 275 8 6;1073 322 8 7;1168 207 8 8;1205 150 6 6;1147 190 6 6;1138 326 6 7;1148 362 8 7;1155 265 8 7') },
    { c: WH, f: true, d: boxes('1058 155 16 12;1062 168 10 14;1183 155 15 14;1165 178 10 9;1098 132 9 6;1182 132 9 6;1123 247 10 9;1137 247 10 9;1145 273 10 10;1131 288 9 7;1147 308 9 9;1165 378 17 11;1219 263 22 9;1041 420 165 15') },
  ] },
  { o: '1130 660', s: [
    // first floor air conditioning
    { c: CY, w: 6, dash: '8 2', d: 'M252 160V170H285M303 125V155M395 115V155M315 192V225H332M410 165V195M415 235V280M380 270V305M316 140V155' },
    { c: MG, f: true, d: boxes('248 150 9 9;313 127 9 8;309 184 9 9;392 112 9 7;405 153 14 7;366 298 9 9;416 280 7 6') },
    { c: OR, w: 9, dash: '10 3', d: 'M345 115L360 130L345 155M322 135H335M390 182H415M390 240L405 260' },
    { c: '#7d2f35', d: 'M370 105H380V118H370ZM328 155L345 165M365 160L380 178M365 285H378' },
    { c: WH, f: true, d: boxes('266 162 6 9;290 156 22 6;289 167 38 6;337 216 22 12;387 153 14 6;404 162 16 6;404 178 8 18;435 228 49 16;412 246 74 3;375 246 12 24;372 282 20 6;408 256 10 14;276 390 153 12') },
    // wiring detail sheet
    { c: '#9b9da0', w: 4, d: 'M57 657H550M57 746H550' },
    { c: '#b4b6b8', d: 'M222 577H471M222 604H471M222 633H445M236 570V636M219 670H450M219 698H450M219 725H445M232 662V727M279 769H531M279 805H531M279 847H531M290 762V850M404 697H428V723H404Z' },
    { c: CY, w: 5, d: 'M262 585H288M310 585H335M352 585H372M403 585H430M368 613H384M403 613H425M452 612V640H537M250 675H270M308 675H328M362 675H380M408 675H428M366 705H382M418 708V730H531M310 820V816H335M358 820V816H383M435 818H460V825M483 818H510V825M67 788V883H192M82 788H67M162 790H192V895M67 808H190M67 828H190M67 847H190M67 865H190M250 868L268 845M235 902H250M102 585H130M102 684H130M335 910H366' },
    { c: MG, w: 8, d: 'M262 590H272M312 590H322M352 590H360M405 590H413M362 622H370M408 618H416M448 613H458M247 682H256M306 682H315M360 682H368M406 682H414M360 708H368M414 709H422M300 830H322M350 830H370M448 830H468M497 830H518M401 782H412M104 602H117M108 628H120M112 697H118M112 708H118M343 888H358M343 900H358' },
    { c: MG, w: 4, d: 'M199 866H243V885H199ZM199 892H233V910H199ZM255 845L260 832L266 850' },
    { c: MG, f: true, d: boxes('84 787 9 11;84 805 9 11;84 823 9 11;84 842 9 11;84 860 9 11;157 787 9 11;157 805 9 11;157 823 9 11;157 842 9 11;157 860 9 11') },
    { c: YE, w: 8, dash: '8 4', d: 'M80 790V880M172 790V870' },
    { c: '#b0b000', w: 4, dash: '10 4', d: 'M80 803H172M80 821H172M80 840H172M80 858H172M80 876H198' },
    { c: WH, f: true, d: boxes('96 792 60 6;96 810 60 6;96 828 60 6;96 846 60 6;96 864 60 6;81 915 162 6;81 924 162 3;201 870 42 7;201 895 30 7;246 895 24 7;279 639 165 6;279 648 165 3;288 732 105 6;288 741 108 3;348 855 120 10;324 864 21 4;324 873 24 3;378 876 60 8;378 891 78 6;378 903 69 8;96 558 18 8;102 567 30 6;102 609 30 5;138 579 21 6;138 588 63 6;138 598 57 5;135 618 51 5;135 625 46 6;135 633 69 5;108 666 18 3;108 672 18 3;135 681 12 3;135 693 45 6;135 705 21 5;246 595 30 5;291 595 30 5;337 595 30 5;390 595 32 5;357 624 22 3;390 624 32 3;483 630 54 6;460 612 23 5;237 687 30 5;297 687 30 5;345 687 39 5;390 687 45 5;346 717 32 3;459 720 72 6;414 774 9 6;423 780 20 3;387 789 48 3;297 834 24 6;348 834 23 6;447 834 21 6;495 834 24 6') },
    { c: WH, f: true, d: boxes('225 570 7 7;225 598 7 7;225 625 7 7;222 660 7 7;222 690 7 7;222 717 7 7;279 762 7 7;279 796 7 7;279 841 7 7;260 578 10 5;310 578 10 5;404 578 14 5;314 807 8 5;362 807 8 5;453 807 8 5;497 807 8 5;354 877 8 8') },
  ] },
]
</script>

<template>
  <div class="page">
    <section v-for="w in windows" :key="w.id" class="win" :class="w.id">
      <div class="shift" :style="{ marginLeft: w.shift + 'px' }">
        <header class="title">
          <div class="tools">
            <span class="slot app"><Icon n="acad" /></span>
            <span class="slot s8"><Icon n="bigtri" /></span>
            <span class="gap13"></span>
            <button v-for="t in fileTools" :key="t" class="slot s24" :aria-label="t"><Icon :n="t" /></button>
            <span class="slot s12"><Icon n="tri" /></span>
            <button class="slot s24" aria-label="redo"><Icon n="redo" /></button>
            <span class="slot s12"><Icon n="tri" /></span>
            <span class="slot s16"><Icon n="dd" /></span>
            <button class="share"><Icon n="plane" />Share</button>
          </div>
          <div class="caption"><span>Autodesk AutoCAD 2022</span><span>{{ w.file }}</span></div>
          <div class="account">
            <span class="slot s12"><Icon n="rtri" /></span>
            <input class="search" type="text" placeholder="Type a keyword or phrase" aria-label="Search help" />
            <span class="slot s24"><Icon n="mag" /></span>
            <button v-if="w.id !== 'w2'" class="signin"><Icon n="person" />Sign In</button>
            <span class="slot caret"><Icon n="tri" /></span>
            <span class="slot s24"><Icon n="cart" /></span>
            <span class="slot s24"><Icon n="appA" /></span>
          </div>
        </header>
        <nav class="tabs">
          <button v-for="t in tabs" :key="t[0]" :class="{ on: t[0] === 'Home' && w.id === 'w3' }" :style="{ width: t[1] + 'px' }">{{ t[0] }}</button>
          <span class="mini"><Icon n="mini" /><Icon n="tri" /></span>
        </nav>
      </div>
    </section>

    <main class="ribbon">
      <section class="panel p-draw">
        <div class="body">
          <button class="big w42"><Icon n="line" />Line</button>
          <button class="big w44"><Icon n="polyline" />Polyline</button>
          <button class="big w56"><Icon n="circle" />Circle<Icon n="tri" /></button>
          <button class="big w36"><Icon n="arc" />Arc<Icon n="tri" /></button>
          <div class="col mini-col">
            <button v-for="n in ['rect', 'ellipse', 'hatch']" :key="n" class="sm" :aria-label="n"><span class="ic"><Icon :n="n" /></span><Icon n="tri" /></button>
          </div>
        </div>
        <footer>Draw <Icon n="bigtri" /></footer>
      </section>

      <section class="panel p-modify">
        <div class="body pad6">
          <div v-for="(c, i) in modify" :key="i" class="col w71">
            <button v-for="b in c" :key="b[0]" class="sm"><span class="ic"><Icon :n="b[0]" /></span>{{ b[1] }}<span v-if="i === 2" class="more"><Icon n="tri" /></span></button>
          </div>
          <div class="col w24">
            <button v-for="n in ['erase', 'box3', 'offset']" :key="n" class="sm" :aria-label="n"><span class="ic"><Icon :n="n" /></span></button>
          </div>
        </div>
        <footer>Modify <Icon n="bigtri" /></footer>
      </section>

      <section class="panel p-annot">
        <div class="body">
          <button class="big w50"><Icon n="text" />Text<Icon n="tri" /></button>
          <button class="big w58"><Icon n="dim" />Dimension</button>
          <div class="col w78">
            <button class="sm"><span class="ic"><Icon n="linear" /></span>Linear<span class="more"><Icon n="tri" /></span></button>
            <button class="sm"><span class="ic"><Icon n="leader" /></span>Leader<span class="more"><Icon n="tri" /></span></button>
            <button class="sm"><span class="ic"><Icon n="table" /></span>Table</button>
          </div>
        </div>
        <footer>Annotation <Icon n="bigtri" /></footer>
      </section>

      <section class="panel p-layers">
        <div class="body">
          <button class="big w64 two"><Icon n="layprop" />Layer<br />Properties</button>
          <div class="col grow">
            <label class="combo"><span class="slot s24"><Icon n="bulbI" /></span><Icon n="sun" /><Icon n="unlock" /><i class="swatch"></i><select aria-label="Layer"><option>5L</option></select><Icon n="bigtri" /></label>
            <div class="row"><span v-for="n in ['l1', 'l2', 'l3', 'l4']" :key="n" class="slot s24"><Icon :n="n" /></span><button class="sm"><span class="ic"><Icon n="l5" /></span>Make Current</button></div>
            <div class="row"><span v-for="n in ['l6', 'l7', 'l8', 'l9']" :key="n" class="slot s24"><Icon :n="n" /></span><button class="sm"><span class="ic"><Icon n="l10" /></span>Match Layer</button></div>
          </div>
        </div>
        <footer>Layers <Icon n="bigtri" /></footer>
      </section>

      <section class="panel p-block">
        <div class="body">
          <button class="big w44 tall"><Icon n="insert" />Insert<Icon n="tri" /></button>
          <div class="col grow">
            <button class="sm"><span class="ic"><Icon n="create" /></span>Create</button>
            <button class="sm"><span class="ic"><Icon n="edit" /></span>Edit</button>
            <button class="sm"><span class="ic"><Icon n="attr" /></span>Edit Attributes<span class="more"><Icon n="tri" /></span></button>
          </div>
        </div>
        <footer>Block <Icon n="bigtri" /></footer>
      </section>

      <section class="panel p-props">
        <div class="body">
          <button class="big w64 two"><Icon n="match" />Match<br />Properties</button>
          <div class="col grow">
            <div class="row"><span class="slot s18"><Icon n="wheel" /></span><label class="combo"><i class="swatch wide"></i><select aria-label="Object color"><option>ByLayer</option></select><Icon n="bigtri" /></label></div>
            <div class="row"><span class="slot s18"><Icon n="weights" /></span><label class="combo"><i class="rule"></i><select aria-label="Lineweight"><option>ByLayer</option></select><Icon n="bigtri" /></label></div>
            <div class="row"><span class="slot s18"><Icon n="dashes" /></span><label class="combo"><i class="rule"></i><select aria-label="Linetype"><option>CONTINUOUS</option></select><Icon n="bigtri" /></label></div>
          </div>
        </div>
        <footer><span class="mid">Properties <Icon n="bigtri" /></span><Icon n="launch" /></footer>
      </section>

      <section class="panel p-groups">
        <div class="body">
          <button class="big w44"><Icon n="group" />Group</button>
          <div class="col w24">
            <button class="sm c" aria-label="Ungroup"><Icon n="g1" /></button>
            <button class="sm c" aria-label="Group edit"><Icon n="g2" /></button>
            <button class="sm c picked" aria-label="Group selection"><Icon n="g3" /></button>
          </div>
        </div>
        <footer>Groups <Icon n="bigtri" /></footer>
      </section>

      <section class="panel p-utils">
        <div class="body">
          <button class="big w74"><span class="mid34"><Icon n="ruler" /></span>Measure<Icon n="tri" /></button>
          <div class="col w18">
            <button v-for="n in ['u1', 'u2', 'calc']" :key="n" class="sm c" :aria-label="n"><Icon :n="n" /></button>
          </div>
        </div>
        <footer>Utilities <Icon n="bigtri" /></footer>
      </section>

      <section class="panel p-clip">
        <div class="body">
          <button class="big w56"><Icon n="paste" />Paste<Icon n="tri" /></button>
          <div class="col w18">
            <button v-for="n in ['cut', 'copy2']" :key="n" class="sm c" :aria-label="n"><Icon :n="n" /></button>
          </div>
        </div>
        <footer>Clipboard</footer>
      </section>

      <section class="panel p-view">
        <div class="body">
          <button class="big w64"><span class="mid34"><Icon n="base" /></span>Base<Icon n="tri" /></button>
        </div>
        <footer>View <Icon n="bigtri" /><Icon n="launch" /></footer>
      </section>
    </main>

    <nav class="files">
      <button class="file start">Start</button>
      <button class="file k1">KIẾN TRÚC 13,5x14,8m<b>✕</b></button>
      <button class="file k2">KẾT CẤU 13,5x14,8m<b>✕</b></button>
      <button class="file k3">CẤP ĐIỆN 13,5x14,8m<b>✕</b></button>
      <button class="add" aria-label="New drawing">+</button>
    </nav>

    <section class="canvas">
      <svg viewBox="0 271 1776 834" role="img" aria-label="Model space">
        <text x="3" y="289" class="vp">[−][Top][2D Wireframe]</text>
        <text x="912" y="458" class="head">CẤP ĐIỆN</text>
        <g shape-rendering="crispEdges">
          <g v-for="(s, i) in sheets" :key="i" :transform="`translate(${s[0]} ${s[1]}) scale(${s[2]})`">
            <path :d="blockLines" fill="none" stroke="#6a6d71" vector-effect="non-scaling-stroke" />
            <path :d="blockText" fill="#fff" />
            <path d="M7 2.500H235V169H7Z" fill="none" stroke="#0fb5bb" stroke-width="1.500" />
            <path d="M8 4V168H206V4ZM8 4" fill="none" stroke="#d01218" stroke-width="1.300" />
            <path d="M8 3.500H235" stroke="#00d5d5" />
            <path d="M14 3.500H31" stroke="#6f5200" stroke-width="2" />
            <rect width="237" height="171.500" fill="none" stroke="#c9cbcd" vector-effect="non-scaling-stroke" />
          </g>
          <g v-for="(g, i) in groups" :key="'g' + i" :transform="`translate(${g.o}) scale(.33333)`">
            <path v-for="(p, j) in g.s" :key="j" :d="p.d" :fill="p.f ? p.c : 'none'" :stroke="p.f ? 'none' : p.c" :stroke-width="p.w || 3" :stroke-dasharray="p.dash" />
          </g>
          <path d="M1523 813H1568M1575 813H1620M1571.500 765V809M1571.500 817V861M1568 810H1575V817H1568Z" fill="none" stroke="#fff" />
          <path d="M16.500 1038V1088.500H67" fill="none" stroke="#e8e8e8" />
        </g>
        <path d="M18 1021L24 1027L30 1021M24 1027V1034M71 1074L84 1087M84 1074L71 1087" fill="none" stroke="#e8e8e8" />
        <text x="741" y="645" class="mark">Thuvienbanveso.vn</text>
        <text x="1770" y="386" class="edge">W</text>
      </svg>
    </section>

    <section class="layouts">
      <button class="lt on">Model</button>
      <button class="lt">Layout1</button>
      <button class="lt plus" aria-label="New layout">+</button>
      <div class="status">
        <button class="st m">MODEL</button>
        <div class="st g64"><Icon n="grid" /><Icon n="dots" /><Icon n="bigtri" /></div>
        <div class="st g104"><Icon n="ortho" /><Icon n="polar" /><Icon n="bigtri" /><Icon n="iso" /><Icon n="bigtri" /></div>
        <div class="st g64 tight"><span class="hot"><Icon n="otrack" /></span><span class="hot"><Icon n="osnap" /></span><Icon n="bigtri" /></div>
        <div class="st g110 tight"><span class="hot"><Icon n="ann1" /></span><Icon n="ann2" /><Icon n="ann3" /><span class="ratio">1:1 <Icon n="bigtri" /></span></div>
        <div class="st g26"><Icon n="gear" /></div>
      </div>
    </section>

    <footer class="taskbar">
      <button class="start-btn" aria-label="Start"><Icon n="win" /></button>
      <label class="find"><Icon n="find" /><input type="text" placeholder="Type here to search" aria-label="Search" /><Icon n="spark" /></label>
      <button v-for="a in apps" :key="a.n" class="app-btn" :class="{ run: a.run, cur: a.n === 'cadapp' }" :aria-label="a.n">
        <span v-if="a.n === 'ps'" class="ps">Ps</span><Icon v-else :n="a.n" />
      </button>
      <div class="tray"><Icon n="news" /><span class="headline">Những câu chuyện h...</span><Icon n="chev" /><Icon n="wifi" /><Icon n="vol" /><span>E</span></div>
      <div class="copyright">Ban quyen: Thuvienbanveso.vn</div>
    </footer>

    <aside class="logo">
      <svg width="279" height="107" viewBox="0 0 279 107" aria-hidden="true">
        <path d="M214 4L239 28V14L247 22V35L271 64Q250 52 222 47L232 42L214 24L194 38Q203 38 209 42Q184 39 156 48Q166 41 181 38Z" fill="#ec1c2e" />
        <path d="M154 54Q205 38 271 64Q215 47 154 54Z" fill="#ec1c2e" />
        <text x="3" y="79" class="brand">THUVIENBANVESO<tspan class="vn">.vn</tspan></text>
        <text x="5" y="99" class="slogan">THƯ VIỆN BẢN VẼ LỚN NHẤT VIỆT NAM</text>
      </svg>
    </aside>
  </div>
</template>

<style>
body { margin: 0; background: #7b8681; }
</style>

<style scoped>
.page { position: relative; min-height: 100vh; overflow: hidden; background: #7b8681; color: #e6e6e6; font: 12px/16px 'Open Sans', 'Noto Sans', sans-serif; }
button { font: inherit; color: inherit; background: none; border: 0; padding: 0; margin: 0; white-space: nowrap; }
input, select { font: inherit; color: inherit; background: none; border: 0; padding: 0; outline: 0; }
.win { background: #222830; overflow: hidden; }
.w1 { border-bottom: 1px solid #3c4450; }
.w2 { padding-top: 1px; }
.w2 .tabs { height: 19px; }
.shift { width: 100%; }
.title { display: flex; height: 21px; align-items: center; font-size: 11px; }
.tools { width: 360px; display: flex; align-items: center; flex: none; }
.slot { display: flex; align-items: center; justify-content: center; flex: none; }
.app { width: 25px; } .s8 { width: 8px; } .s12 { width: 12px; } .s16 { width: 16px; } .s18 { width: 18px; } .s24 { width: 24px; }
.gap13 { width: 13px; }
.share { display: flex; align-items: center; gap: 5px; padding-left: 5px; color: #6fc3ff; font-size: 12px; }
.caption { flex: 1; display: flex; justify-content: center; gap: 12px; font-size: 12px; white-space: nowrap; }
.account { width: 390px; display: flex; align-items: center; flex: none; }
.search { width: 178px; height: 20px; box-sizing: border-box; margin-left: 2px; padding: 0 3px; background: #465062; font-style: italic; font-size: 11px; align-self: flex-start; }
.search::placeholder { color: #b9bec7; opacity: 1; }
.signin { display: flex; align-items: center; gap: 5px; padding-left: 5px; width: 72px; font-size: 12px; }
.caret { width: 54px; }
.tabs { display: flex; height: 20px; margin-top: 6px; padding-left: 4px; color: #b4b8bd; }
.tabs button { flex: none; }
.tabs .on { background: #3b4453; color: #fff; }
.mini { display: flex; align-items: center; gap: 3px; margin-left: 21px; }
.ribbon { display: flex; height: 99px; background: #3b4453; border-left: 2px solid #222830; box-sizing: border-box; overflow: hidden; }
.panel { display: flex; flex-direction: column; flex: none; box-sizing: border-box; border-right: 1px solid #222830; }
.p-draw { width: 224px; } .p-modify { width: 249px; } .p-annot { width: 190px; } .p-layers { width: 274px; } .p-block { width: 162px; }
.p-props { width: 264px; } .p-groups { width: 69px; } .p-utils { width: 97px; } .p-clip { width: 80px; } .p-view { flex: 1; border: 0; }
.body { display: flex; flex: 1; padding-top: 5px; min-height: 0; }
.pad6 { padding-left: 6px; }
.panel footer { display: flex; align-items: center; justify-content: center; gap: 6px; height: 20px; }
.p-props footer { padding-right: 5px; } .mid { display: flex; flex: 1; justify-content: center; align-items: center; gap: 6px; }
.p-view footer { justify-content: flex-start; padding-left: 6px; }
.big { display: flex; flex-direction: column; align-items: center; flex: none; padding-top: 2px; line-height: 15px; }
.big > svg:first-child, .mid34 { margin-bottom: 3px; }
.big.two { padding-top: 0; } .big.two > svg:first-child { margin-bottom: 1px; }
.big.tall { padding-top: 0; } .big.tall > svg:first-child { margin-bottom: -2px; }
.mid34 { height: 34px; display: flex; align-items: center; }
.w36 { width: 36px; } .w42 { width: 42px; } .w44 { width: 44px; } .w50 { width: 50px; } .w56 { width: 56px; } .w58 { width: 58px; } .w64 { width: 64px; } .w74 { width: 74px; }
.col { display: flex; flex-direction: column; flex: none; }
.col.w71 { width: 71px; } .col.w24 { width: 24px; } .col.w18 { width: 18px; } .col.w78 { width: 78px; padding-left: 5px; } .col.grow { flex: 1; }
.mini-col { padding-left: 6px; }
.sm { display: flex; align-items: center; height: 24px; gap: 4px; }
.sm .ic { width: 18px; display: flex; justify-content: center; flex: none; }
.sm.c { width: 24px; justify-content: center; }
.w18 .sm.c { width: 18px; }
.picked { outline: 1px solid #6fc3ff; outline-offset: -1px; background: #2f5673; }
.more { margin-left: auto; padding-right: 8px; }
.p-block .more, .p-annot .more { padding-right: 5px; }
.row { display: flex; align-items: center; height: 24px; }
.combo { display: flex; align-items: center; gap: 6px; height: 20px; flex: 1; margin-right: 1px; padding-right: 3px; background: #4c586b; border: 1px solid #222933; }
.col > .combo { flex: none; height: 20px; margin-top: 1px; margin-bottom: 1px; gap: 5px; }
.col > .combo .s24 { width: 20px; }
.combo select { flex: 1; min-width: 0; appearance: none; color: #fff; }
.swatch { width: 12px; height: 12px; border: 1px solid #111; background: #00ffff; }
.swatch.wide { width: 15px; height: 15px; border-color: #7d8591; margin: 0 4px 0 11px; }
.rule { width: 64px; height: 1px; background: #fff; margin-left: 3px; margin-right: -4px; }
.files { display: flex; height: 25px; align-items: flex-end; background: #222830; border-bottom: 5px solid #3b4453; padding-left: 16px; color: #a9adb3; }
.file { height: 22px; background: #2c333e; border-radius: 10px 10px 0 0; text-align: left; padding: 3px 0 0 16px; margin-right: 1px; box-sizing: border-box; }
.file b { font-size: 14px; line-height: 12px; font-weight: 700; margin-left: 4px; color: #8f949b; }
.start { width: 128px; } .k1 { width: 157px; padding-left: 10px; } .k2 { width: 147px; padding-left: 11px; }
.k3 { width: 158px; padding-left: 9px; background: #3b4453; color: #fff; font-weight: 700; }
.add { width: 20px; height: 18px; margin: 0 0 1px 11px; background: #2c333e; border-radius: 8px; font-size: 16px; }
.canvas { background: #222830; }
.canvas svg { display: block; width: 100%; height: auto; }
.vp { font-size: 12px; fill: #e6e6e6; }
.head { font: 300 41px Inter, sans-serif; fill: #fff; }
.mark { font: 900 30px Inter, sans-serif; fill: #ff3b3b; }
.edge { font: 900 27px Inter, sans-serif; fill: #b4b6b8; }
.layouts { display: flex; height: 29px; box-sizing: border-box; background: #222831; border-top: 1px solid #454b54; padding-left: 12px; color: #a9adb3; }
.lt { height: 17px; width: 56px; background: #2b323d; border-radius: 0 0 8px 8px; margin-right: 3px; line-height: 16px; }
.lt.on { background: #3b4453; color: #fff; font-weight: 700; width: 57px; }
.layouts > .lt:nth-child(2) { width: 60px; }
.lt.plus { width: 22px; margin-left: 3px; font-size: 16px; }
.status { display: flex; gap: 3px; margin-left: auto; padding-top: 1px; }
.st { display: flex; align-items: center; justify-content: space-evenly; height: 24px; background: #3b4453; color: #f0f0f0; }
.m { width: 47px; } .g64 { width: 64px; } .g104 { width: 104px; } .g110 { width: 109px; } .g26 { width: 25px; }
.tight { justify-content: space-between; padding-right: 5px; box-sizing: border-box; }
.hot { width: 22px; height: 22px; background: #5f8fc4; display: flex; align-items: center; justify-content: center; }
.ratio { display: flex; align-items: center; gap: 4px; }
.taskbar { position: relative; display: flex; height: 40px; background: linear-gradient(90deg, #30271f, #3f3429 30%, #443829); font-size: 15px; color: #fff; }
.start-btn { width: 48px; display: flex; align-items: center; justify-content: center; }
.find { display: flex; align-items: center; width: 288px; box-sizing: border-box; padding: 0 9px 0 11px; background: #f2f2f2; border: 1px solid #cfcfcf; margin-right: 1px; }
.find input { flex: 1; min-width: 0; margin-left: 10px; color: #222; font-size: 14px; }
.find input::placeholder { color: #3a3a3a; opacity: 1; }
.app-btn { width: 49px; display: flex; align-items: center; justify-content: center; position: relative; }
.run::after { content: ''; position: absolute; left: 4px; right: 4px; bottom: 0; height: 2px; background: #76b9ed; }
.cur { background: #6b6055; }
.ps { width: 21px; height: 21px; line-height: 20px; border-radius: 4px; background: #001e36; color: #31a8ff; font-size: 12px; font-weight: 700; }
.tray { margin-left: auto; display: flex; align-items: center; gap: 12px; width: 270px; overflow: hidden; white-space: nowrap; }
.headline { width: 156px; margin-left: -5px; font-size: 14px; }
.copyright { position: absolute; left: 653px; top: 16px; font: 900 30px/32px Inter, sans-serif; color: #c6c6c6; white-space: nowrap; }
.logo { position: absolute; top: 0; right: 0; background: #fff; height: 107px; }
.logo svg { display: block; }
.brand { font: 700 27px Roboto, sans-serif; fill: #ec1c2e; }
.vn { font-size: 22px; }
.slogan { font: 400 15px Roboto, sans-serif; fill: #4a4a4a; }
</style>
